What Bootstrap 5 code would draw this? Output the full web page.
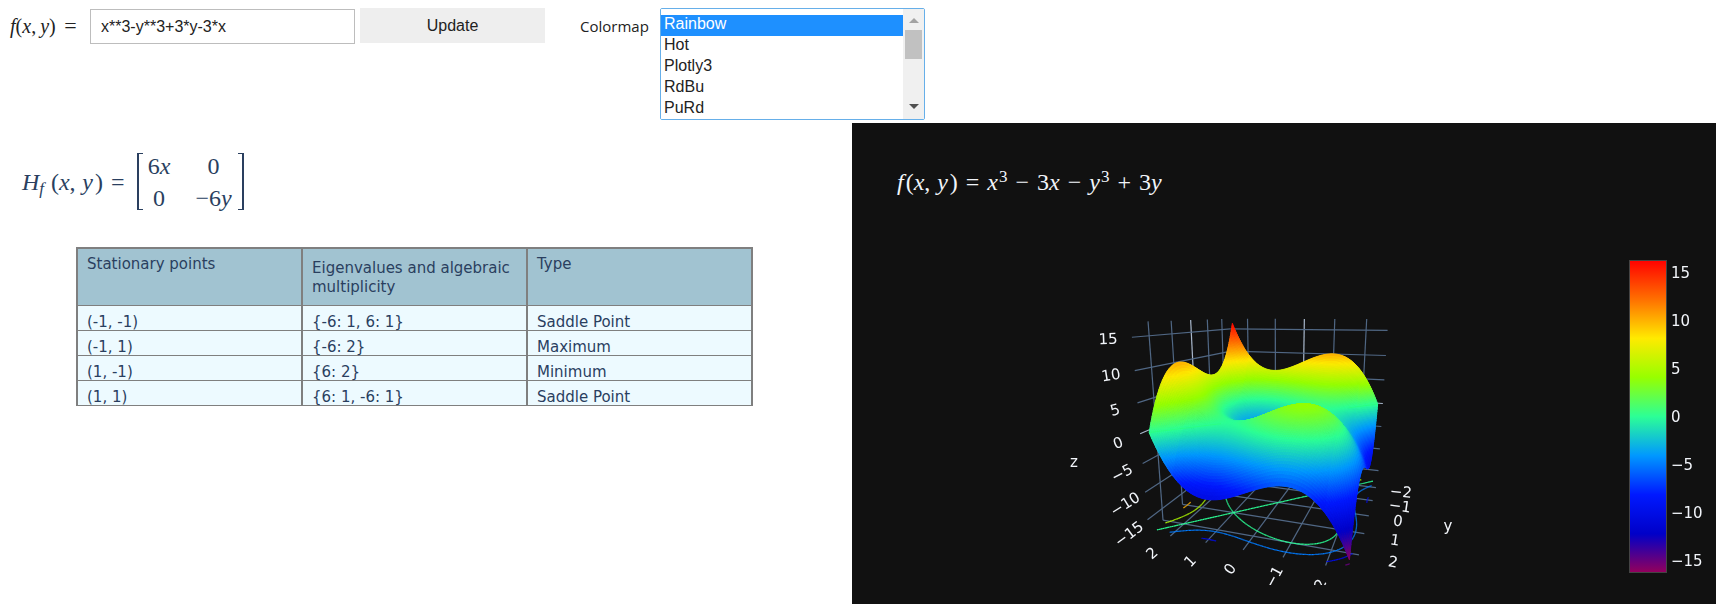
<!DOCTYPE html>
<html lang="en">
<head>
<meta charset="utf-8">
<meta name="viewport" content="width=device-width, initial-scale=1">
<title>Stationary points</title>
<link href="https://cdn.jsdelivr.net/npm/bootstrap@5.3.0/dist/css/bootstrap.min.css" rel="stylesheet">
<style>
  body { font-family: "Liberation Sans", Arial, sans-serif; color: #222; line-height: 1.25; }
  .toolbar { padding: 8px 8px 3px 8px; min-height: 123px; }
  .math { font-family: "Liberation Serif", "Times New Roman", serif; white-space: nowrap; }
  .math sub, .math sup { font-size: 17px; line-height: 0; }
  .math sup { margin-left: 1px; }
  .math .op { padding: 0 2px; }
  .fx-label { font-size: 20px; width: 82px; line-height: 36px; padding-left: 2px; }
  .fx-label .op { padding-left: 3px; font-size: 22px; line-height: 1; }
  .fx-input { width: 265px; height: 35px; padding: 0 10px; border: 1px solid #bdbdbd; border-radius: 0; font-size: 16px; color: #222; margin-top: 1px; }
  .update-btn { width: 185px; height: 35px; padding: 0; margin-left: 5px; border: 0; border-radius: 0; background: #eee; color: #222; font-size: 16px; }
  .cm-label { font-family: "Open Sans", "Noto Sans", sans-serif; font-size: 15px; line-height: 36px; margin-left: 35px; width: 80px; }
  .cm-box { width: 265px; }
  .cm-select { width: 100%; height: 112px; padding: 6px 0 0; border: 1px solid #66afe9; border-radius: 2px; font-size: 16px; color: #222; overflow-y: scroll; scrollbar-width: none; outline: 0; background: #fff; }
  .cm-select option { padding: 0 3px; height: 21px; min-height: 21px; line-height: 21px; }
  .cm-select option:checked { background: #1e90ff linear-gradient(#1e90ff, #1e90ff); color: #fff; }
  .cm-scroll { position: absolute; top: 1px; right: 1px; bottom: 1px; width: 21px; background: #f0f0f0; pointer-events: none; padding: 9px 2px 10px; }
  .cm-thumb { width: 17px; height: 29px; margin-top: 7px; background: #c1c1c1; }

  .panels { display: grid; grid-template-columns: 852fr 864fr; }
  .hessian-panel { color: #2a3f5f; padding-top: 30px; }
  .hessian { font-size: 24px; padding-left: 22px; }
  .hessian .hessian-eq { width: 115px; }
  .matrix { display: grid; grid-template-columns: 44px 1fr; column-gap: 8px; width: 107px; padding: 0 6px 0 0; position: relative; line-height: 32px; height: 57px; align-content: center; text-align: center; }
  .matrix::before, .matrix::after { content: ""; position: absolute; top: 0; bottom: 0; width: 6px; border: 2px solid #2a3f5f; border-width: 1px 0 1px 2px; }
  .matrix::before { left: 0; }
  .matrix::after { right: 0; border-width: 1px 2px 1px 0; }

  .points { width: calc(100% - 175px); margin: 37px 0 0 76px; table-layout: fixed; border-collapse: collapse; font-family: "DejaVu Sans", Verdana, sans-serif; font-size: 15px; border: 2px solid #7f7f7f; border-bottom-width: 1px; color: #2a3f5f; }
  .points th, .points td { border: 2px solid #7f7f7f; border-width: 1px 2px; font-weight: 400; vertical-align: top; }
  .points th { height: 57px; padding: 6px 8px 0 9px; line-height: 19px; background: #a1c3d1; border-top-width: 2px; }
  .points th.wrapped { padding-top: 10px; }
  .points td { height: 25px; padding: 8px 8px 0 9px; line-height: 16px; background: #edfaff; }

  .plot-panel { background: #111; color: #f2f5fa; min-height: 481px; padding-top: 44px; }
  .plot-title { font-size: 24px; line-height: 30px; padding-left: 45px; height: 93px; }
  .scene { display: grid; flex: 1 1 0; min-width: 0; align-self: flex-start; }
  .scene > * { grid-area: 1 / 1; width: 100%; }
  .scene text, .scale-ticks { font-family: "DejaVu Sans", Verdana, sans-serif; font-size: 15px; fill: #f2f5fa; }
  .scene text { text-anchor: middle; dominant-baseline: central; }
  .scale-bar { width: 38px; height: 313px; outline: 1px solid #444; outline-offset: -1px;
    background: linear-gradient(to top, #96005a, #0000c8, #0019ff, #0098ff, #2cff96, #97ff00, #ffea00, #ff6f00, #ff0000); }
  .scale-ticks { width: 49px; padding: 1px 0 0 4px; line-height: 24px; height: 313px; }
</style>
</head>
<body>

<form class="toolbar d-flex align-items-start" onsubmit="return false">
  <label class="math fx-label" for="fx"><i>f</i>(<i>x</i>,&thinsp;<i>y</i>)<span class="op"> =</span></label>
  <input class="fx-input" id="fx" type="text" value="x**3-y**3+3*y-3*x">
  <button class="update-btn" type="submit">Update</button>
  <label class="cm-label" for="cm">Colormap</label>
  <div class="cm-box position-relative">
    <select class="cm-select d-block" id="cm" size="5">
      <option selected>Rainbow</option><option>Hot</option><option>Plotly3</option><option>RdBu</option><option>PuRd</option>
      <option>Greys</option><option>Viridis</option><option>Jet</option><option>Blues</option><option>Earth</option><option>Electric</option><option>Portland</option>
    </select>
    <div class="cm-scroll d-flex flex-column align-items-center" aria-hidden="true">
      <svg width="10" height="5"><path d="M0 5h10L5 0z" fill="#a3a3a3"/></svg>
      <div class="cm-thumb"></div>
      <svg class="mt-auto" width="10" height="5"><path d="M0 0h10L5 5z" fill="#505050"/></svg>
    </div>
  </div>
</form>

<main class="panels">
  <section class="hessian-panel">
    <div class="hessian math d-flex align-items-center">
      <div class="hessian-eq"><i>H</i><sub><i>f</i></sub>&thinsp;&hairsp;(<i>x</i>,&thinsp;&hairsp;<i>y</i>&hairsp;)<span class="op"> =</span></div>
      <div class="matrix">
        <span>6<i>x</i></span><span>0</span>
        <span>0</span><span>−6<i>y</i></span>
      </div>
    </div>
    <table class="points">
      <thead><tr><th>Stationary points</th><th class="wrapped">Eigenvalues and algebraic multiplicity</th><th>Type</th></tr></thead>
      <tbody>
        <tr><td>(-1, -1)</td><td>{-6: 1, 6: 1}</td><td>Saddle Point</td></tr>
        <tr><td>(-1, 1)</td><td>{-6: 2}</td><td>Maximum</td></tr>
        <tr><td>(1, -1)</td><td>{6: 2}</td><td>Minimum</td></tr>
        <tr><td>(1, 1)</td><td>{6: 1, -6: 1}</td><td>Saddle Point</td></tr>
      </tbody>
    </table>
  </section>

  <section class="plot-panel">
    <div class="plot-title math"><i>f</i>&hairsp;(<i>x</i>,&thinsp;&hairsp;<i>y</i>&hairsp;)<span class="op"> = </span><i>x</i><sup>3</sup><span class="op"> − </span>3<i>x</i><span class="op"> − </span><i>y</i><sup>3</sup><span class="op"> + </span>3<i>y</i></div>
    <div class="d-flex">
      <div class="scene">
        <canvas id="surface" width="777" height="325"></canvas>
        <svg viewBox="0 0 777 325" id="labels" role="img" aria-label="Axis labels"></svg>
      </div>
      <div class="scale-bar"></div>
      <div class="scale-ticks d-flex flex-column justify-content-between">
        <span>15</span><span>10</span><span>5</span><span>0</span><span>−5</span><span>−10</span><span>−15</span>
      </div>
    </div>
  </section>
</main>

<script src="https://cdn.jsdelivr.net/npm/bootstrap@5.3.0/dist/js/bootstrap.bundle.min.js"></script>
<script>
  const ctx = document.getElementById('surface').getContext('2d');
  const f = (x, y) => x ** 3 - 3 * x - y ** 3 + 3 * y;

  // Camera matrix for coordinates scaled to the domain; w grows with distance.
  const M = [-0.20664, -0.22052, -0.03605, 0.68536, 0.00336, -0.00754, -0.27555, 0.34951, 0.06661, -0.19857, -0.05288];
  function project(x, y, z) {
    x /= 2.5; y /= 2.5; z /= 16.25;
    const w = M[8] * x + M[9] * y + M[10] * z + 1;
    return [
      198 + 1000 / 3 * (M[0] * x + M[1] * y + M[2] * z + M[3]) / w,
      40 + 1000 / 3 * (M[4] * x + M[5] * y + M[6] * z + M[7]) / w,
      w
    ];
  }

  const stops = [[150, 0, 90], [0, 0, 200], [0, 25, 255], [0, 152, 255], [44, 255, 150], [151, 255, 0], [255, 234, 0], [255, 111, 0], [255, 0, 0]];
  function color(z) {
    const t = Math.min(7.9999, Math.max(0, (z + 16.25) / 32.5 * 8)), i = Math.floor(t), k = t - i;
    return 'rgb(' + stops[i].map((c, j) => Math.round(c + (stops[i + 1][j] - c) * k)) + ')';
  }

  function line(a, b, style, width) {
    const p = project(...a), q = project(...b);
    ctx.strokeStyle = style; ctx.lineWidth = width;
    ctx.beginPath(); ctx.moveTo(p[0], p[1]); ctx.lineTo(q[0], q[1]); ctx.stroke();
  }

  // Walls and floor
  const W = 2.65, Z = 17.225;
  for (const t of [-2, -1, 0, 1, 2]) {
    const c = t ? '#506784' : '#a9b8cc';
    line([W, t, -Z], [W, t, Z], c, 1.2);
    line([t, -W, -Z], [t, -W, Z], c, 1.2);
    line([t, -W, -Z], [t, W, -Z], '#506784', 1.2);
    line([-W, t, -Z], [W, t, -Z], '#506784', 1.2);
  }
  for (const z of [-15, -10, -5, 0, 5, 10, 15]) {
    const c = z ? '#506784' : '#a9b8cc';
    line([W, -W, z], [W, W, z], c, 1.2);
    line([-W, -W, z], [W, -W, z], c, 1.2);
  }

  // Level curves projected on the floor, cell by cell
  const N = 150, at = i => -2.5 + 5 * i / N;
  for (const level of [-15, -10, -5, 0, 5, 10, 15]) {
    for (let i = 0; i < N; i++) for (let j = 0; j < N; j++) {
      const c = [[at(i), at(j)], [at(i + 1), at(j)], [at(i + 1), at(j + 1)], [at(i), at(j + 1)]], hit = [];
      for (let k = 0; k < 4; k++) {
        const a = c[k], b = c[(k + 1) % 4], u = f(...a) - level, v = f(...b) - level;
        if ((u < 0) !== (v < 0)) { const s = u / (u - v); hit.push([a[0] + (b[0] - a[0]) * s, a[1] + (b[1] - a[1]) * s, -Z]); }
      }
      if (hit.length > 1) line(hit[0], hit[1], color(level), 1.2);
    }
  }

  // Surface, far cells first
  const cells = [];
  for (let i = 0; i < N; i++) for (let j = 0; j < N; j++) {
    const q = [[i, j], [i + 1, j], [i + 1, j + 1], [i, j + 1]].map(([a, b]) => project(at(a), at(b), f(at(a), at(b))));
    cells.push([q, f(at(i + .5), at(j + .5)), q[0][2] + q[2][2]]);
  }
  cells.sort((a, b) => b[2] - a[2]);
  ctx.lineWidth = 1;
  ctx.lineJoin = 'round';
  for (const [q, z] of cells) {
    ctx.fillStyle = ctx.strokeStyle = color(z);
    ctx.beginPath();
    q.forEach((p, k) => k ? ctx.lineTo(p[0], p[1]) : ctx.moveTo(p[0], p[1]));
    ctx.closePath(); ctx.fill(); ctx.stroke();
  }
  // Zero level where it meets the two side corners
  line([2.5, 2.5, 0], [1.2, 1.2, 0], 'rgba(44,255,120,.6)', 1);
  line([-2.5, -2.5, 0], [-1.7, -1.7, 0], 'rgba(44,255,120,.6)', 1);

  // Text, x, y, rotation
  const labels = [
    ['15', 256, 79, -2], ['10', 259, 115, -9], ['5', 263, 150, -15], ['0', 266, 183, -20], ['−5', 270, 213, -27], ['−10', 273, 244, -32], ['−15', 277, 274, -37],
    ['2', 300, 293, -42], ['1', 338, 301, -47], ['0', 378, 309, -54], ['−1', 422, 317, -62], ['−2', 466, 330, -68],
    ['−2', 549, 232, 5], ['−1', 548, 246, 8], ['0', 546, 261, 8], ['1', 543, 280, 9], ['2', 541, 302, 10],
    ['z', 222, 202, 0], ['y', 596, 266, 0]
  ];
  const svg = document.getElementById('labels');
  for (const [s, x, y, r] of labels) {
    const t = document.createElementNS('http://www.w3.org/2000/svg', 'text');
    t.setAttribute('transform', `translate(${x} ${y}) rotate(${r})`);
    t.textContent = s;
    svg.append(t);
  }
</script>
</body>
</html>
